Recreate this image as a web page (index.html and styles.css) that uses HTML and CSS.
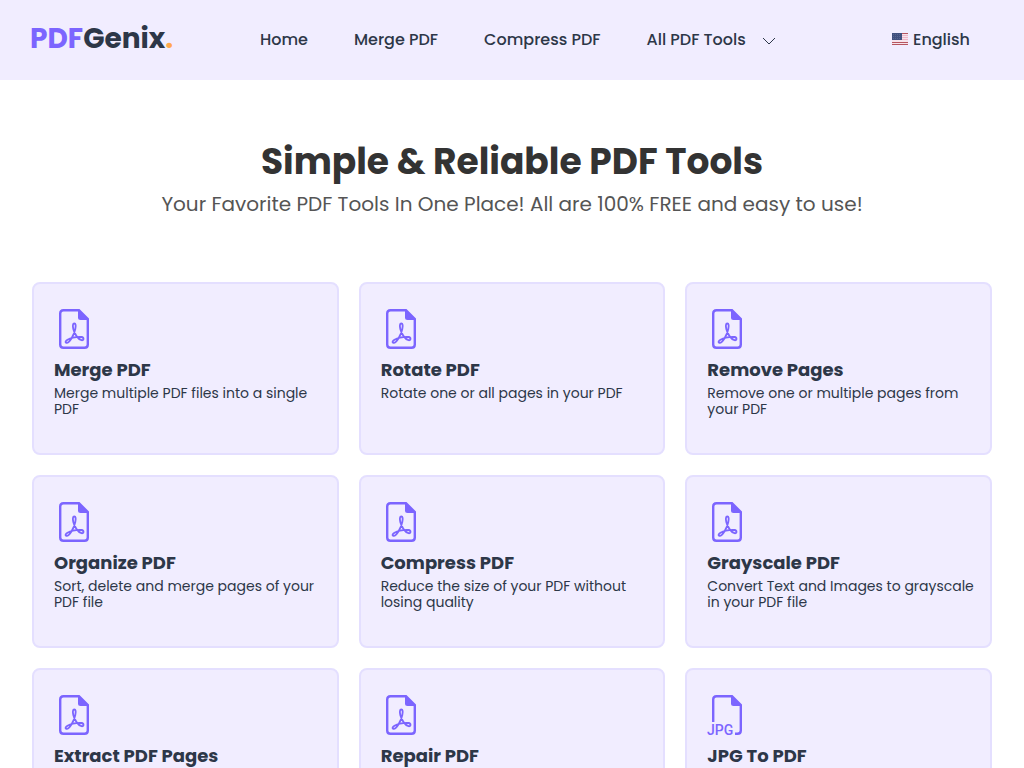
FILE: index.html
```html
<!DOCTYPE html>
<html lang="en">
<head>
    <meta charset="UTF-8">
    <meta name="viewport" content="width=device-width, initial-scale=1.0">
    <title>PDFGenix - Simple & Reliable PDF Tools</title>
    <link rel="stylesheet" href="styles.css">
</head>
<body>

    <!-- shared icons -->
    <svg class="sprite" aria-hidden="true">
        <symbol id="icon-pdf" viewBox="0 0 40 40">
            <path d="M25 1.200H9.500Q6.200 1.200 6.200 4.500V35.500Q6.200 38.800 9.500 38.800H30.500Q33.800 38.800 33.800 35.500V10Z" fill="none" stroke="currentColor" stroke-width="2.400"/>
            <path d="M24 1V8.500Q24 11 26.500 11H34.500Z" fill="currentColor"/>
            <path d="M12.300 33.800C15.500 34.500 20.200 25.500 21.300 20C22 16.500 21.800 14.500 20.300 14.500C18.700 14.500 18.600 17 19.300 20C20.500 25 24 30.300 27.500 31.200C30 31.700 30.300 28.500 27.500 28C23.500 27.400 17 28.800 13.500 30.800C11.500 32 11 33.400 12.300 33.800Z" fill="none" stroke="currentColor" stroke-width="1.800"/>
        </symbol>
        <symbol id="icon-jpg" viewBox="0 0 40 40">
            <path d="M6.200 27V4.500Q6.200 1.200 9.500 1.200H25L33.800 10V35.500Q33.800 38.800 30.500 38.800H28" fill="none" stroke="currentColor" stroke-width="2.400"/>
            <path d="M24 1V8.500Q24 11 26.500 11H34.500Z" fill="currentColor"/>
            <text x="0" y="40" class="icon-text">JPG</text>
        </symbol>
    </svg>

    <header class="header">
        <a href="#" class="logo"><span class="logo-pdf">PDF</span>Genix<span class="logo-dot">.</span></a>
        <nav class="nav">
            <a href="#">Home</a>
            <a href="#">Merge PDF</a>
            <a href="#">Compress PDF</a>
            <button type="button">All PDF Tools
                <svg class="arrow" viewBox="0 0 14 8"><path d="M1 1l6 6 6-6" fill="none" stroke="currentColor"/></svg>
            </button>
        </nav>
        <button type="button" class="language">
            <svg class="flag" viewBox="0 0 16 12">
                <rect width="16" height="12" fill="#f6e3ec"/>
                <path d="M0 .5h16M0 9.500h16M0 11.500h16" stroke="#b65560"/>
                <path d="M8 2.500h8M8 4.500h8M8 6.500h8" stroke="#efb5c8"/>
                <rect width="10" height="7" fill="#40507f"/>
                <path d="M1 1.500h8M1 3.500h8M1 5.500h8" stroke="#6d7ba3" stroke-width=".5" stroke-dasharray="1 1"/>
            </svg>
            English
        </button>
    </header>

    <main>
        <section class="hero">
            <h1>Simple &amp; Reliable PDF Tools</h1>
            <p>Your Favorite PDF Tools In One Place! All are 100% FREE and easy to use!</p>
        </section>

        <section class="tools">
            <a href="#" class="card">
                <svg class="icon"><use href="#icon-pdf"/></svg>
                <h2>Merge PDF</h2>
                <p>Merge multiple PDF files into a single PDF</p>
            </a>
            <a href="#" class="card">
                <svg class="icon"><use href="#icon-pdf"/></svg>
                <h2>Rotate PDF</h2>
                <p>Rotate one or all pages in your PDF</p>
            </a>
            <a href="#" class="card">
                <svg class="icon"><use href="#icon-pdf"/></svg>
                <h2>Remove Pages</h2>
                <p>Remove one or multiple pages from your PDF</p>
            </a>
            <a href="#" class="card">
                <svg class="icon"><use href="#icon-pdf"/></svg>
                <h2>Organize PDF</h2>
                <p>Sort, delete and merge pages of your PDF file</p>
            </a>
            <a href="#" class="card">
                <svg class="icon"><use href="#icon-pdf"/></svg>
                <h2>Compress PDF</h2>
                <p>Reduce the size of your PDF without losing quality</p>
            </a>
            <a href="#" class="card">
                <svg class="icon"><use href="#icon-pdf"/></svg>
                <h2>Grayscale PDF</h2>
                <p>Convert Text and Images to grayscale in your PDF file</p>
            </a>
            <a href="#" class="card">
                <svg class="icon"><use href="#icon-pdf"/></svg>
                <h2>Extract PDF Pages</h2>
            </a>
            <a href="#" class="card">
                <svg class="icon"><use href="#icon-pdf"/></svg>
                <h2>Repair PDF</h2>
            </a>
            <a href="#" class="card">
                <svg class="icon"><use href="#icon-jpg"/></svg>
                <h2>JPG To PDF</h2>
            </a>
        </section>
    </main>

</body>
</html>
```
FILE: styles.css
```css
* {
    box-sizing: border-box;
    margin: 0;
    padding: 0;
}
body {
    font-family: Poppins, Inter, sans-serif;
    background: #fff;
    color: #2d3748;
}
a {
    color: inherit;
    text-decoration: none;
}
button {
    display: flex;
    align-items: center;
    font: inherit;
    color: inherit;
    background: none;
    border: none;
    cursor: pointer;
}
.sprite {
    display: none;
}
.header {
    display: flex;
    align-items: center;
    min-height: 80px;
    padding: 0 54px 2px 30px;
    background: #f1edff;
    font-size: 16px;
    font-weight: 500;
    white-space: nowrap;
}
.logo {
    width: 230px;
    font-size: 28px;
    font-weight: 700;
}
.logo-pdf {
    color: #7c65ff;
}
.logo-dot {
    color: #ffa94d;
}
.nav {
    display: flex;
    align-items: center;
    gap: 46px;
}
.arrow {
    width: 14px;
    height: 8px;
    margin: 4px 0 0 16px;
}
.language {
    gap: 5px;
    margin-left: auto;
}
.flag {
    width: 16px;
    height: 12px;
}
.hero {
    padding: 56px 32px 62px;
    text-align: center;
}
.hero h1 {
    color: #333;
    font-size: 36px;
    line-height: 52px;
    font-weight: 700;
}
.hero p {
    color: #555;
    font-size: 20px;
    line-height: 32px;
}
.tools {
    display: grid;
    grid-template-columns: repeat(3, 1fr);
    gap: 20px;
    padding: 0 32px 32px;
}
.card {
    min-height: 173px;
    padding: 25px 12px 20px 20px;
    background: #f1edff;
    border: 2px solid #e4dfff;
    border-radius: 8px;
}
.icon {
    display: block;
    width: 40px;
    height: 40px;
    color: #7c65ff;
}
.icon-text {
    font-family: Roboto, sans-serif;
    font-size: 14px;
    font-weight: 500;
    fill: currentColor;
}
.card h2 {
    margin-top: 8px;
    font-size: 18px;
    line-height: 26px;
    font-weight: 700;
}
.card p {
    margin-top: 2px;
    font-size: 14px;
    line-height: 16px;
}
```
